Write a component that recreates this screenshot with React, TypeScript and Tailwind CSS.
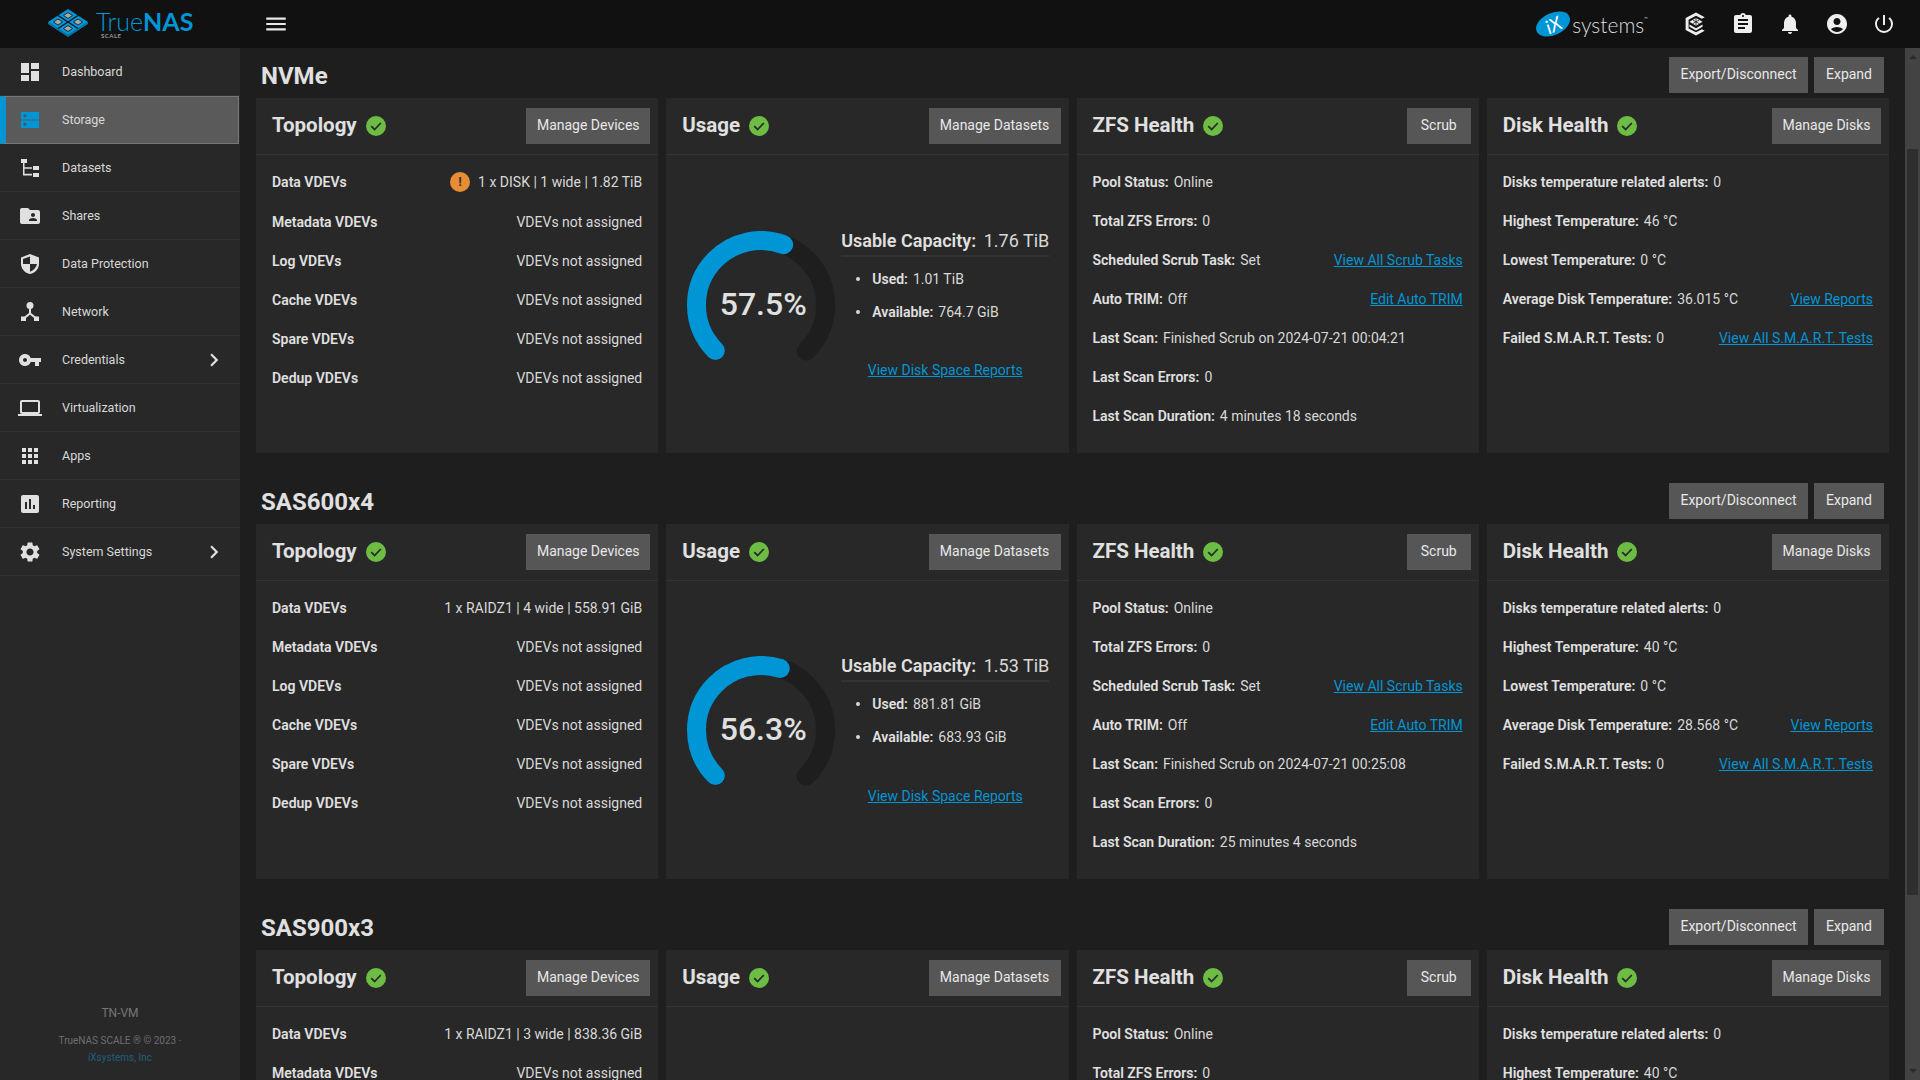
import type { ReactNode } from "react";
import {
  MdAccountCircle,
  MdApps,
  MdAssessment,
  MdAssignment,
  MdChevronRight,
  MdDashboard,
  MdFolderShared,
  MdLaptop,
  MdMenu,
  MdNotifications,
  MdPowerSettingsNew,
  MdSettings,
  MdVpnKey
} from "react-icons/md";

function StorageIcon() {
  return (
    <svg viewBox="0 0 24 24" className="h-6 w-6">
      <rect x="3" y="4" width="18" height="7.5" fill="#0095d5" />
      <rect x="3" y="12.5" width="18" height="7.5" fill="#0095d5" />
      <circle cx="7" cy="7.8" r="1.6" fill="#3c5a6c" />
      <circle cx="7" cy="16.2" r="1.6" fill="#3c5a6c" />
    </svg>
  );
}

function DatasetsIcon() {
  return (
    <svg viewBox="0 0 24 24" className="h-6 w-6 text-[#e0e0e0]" fill="currentColor">
      <rect x="3" y="3" width="6" height="4" />
      <rect x="15" y="10" width="6" height="4" />
      <rect x="15" y="17" width="6" height="4" />
      <path d="M5 7h1.5v4.2H14v1.6H6.5v5H14v1.6H5z" />
    </svg>
  );
}

function ShieldIcon() {
  return (
    <svg viewBox="0 0 24 24" className="h-6 w-6 text-[#e0e0e0]" fill="none">
      <path d="M12 2 3 5.5v6.2c0 5 3.8 9.2 9 10.3 5.2-1.100 9-5.300 9-10.300V5.500z" fill="currentColor" />
      <path d="M12 4.400 5 7v5h7zM12 12v7.700c3.500-1 6.200-4 7-7.700z" fill="#282828" />
    </svg>
  );
}

function NetworkIcon() {
  return (
    <svg viewBox="0 0 24 24" className="h-6 w-6 text-[#e0e0e0]" fill="currentColor">
      <circle cx="12" cy="5.500" r="3.500" />
      <path d="M11 8h2v5l5 4-1.300 1.500L12 14.700l-4.700 3.800L6 17l5-4z" />
      <rect x="3" y="16.500" width="5" height="4.500" />
      <rect x="16" y="16.500" width="5" height="4.500" />
    </svg>
  );
}

function TrueCommandIcon() {
  return (
    <svg viewBox="1.500 1 21 22" className="h-6 w-6 text-[#eeeeee]" fill="none">
      <path d="M12 1.500 2.500 6.500v11l9.500 5 8-4.200-2.600-1.500-5.400 2.800-6.800-3.500V8l6.800-3.500L17.400 7.300 20 5.800z" fill="currentColor" />
      <path d="M12 6.500 18 10l-6 3.500L6 10z" fill="currentColor" />
      <path d="M6 12.500l6 3.500 6-3.500v2l-6 3.500-6-3.500z" fill="currentColor" />
      <path d="M12 6.500v7M9 8.300l6 3.400M15 8.300l-6 3.400" stroke="#111111" strokeWidth="0.700" />
    </svg>
  );
}

function TrueNasMark() {
  const tiles = [
    [20, 6.500],
    [10, 13],
    [30, 13],
    [20, 19.500]
  ];
  return (
    <svg viewBox="0 0 40 28" className="mb-[3px] h-7 w-10 shrink-0">
      <path d="M0 13 20 26 40 13v2L20 28 0 15z" fill="#0078ab" />
      <path d="M20 0 40 13 20 26 0 13z" fill="#0095d5" />
      <path d="M10 6.500 30 19.500M30 6.500 10 19.500" stroke="#111111" strokeWidth="1.200" />
      {tiles.map(([x, y]) => (
        <path
          key={`${x}-${y}`}
          d={`M${x} ${y - 3} ${x + 4.500} ${y} ${x} ${y + 3} ${x - 4.500} ${y}z`}
          fill="#a8a8a8"
          stroke="#111111"
          strokeWidth="0.800"
        />
      ))}
    </svg>
  );
}

function CheckBadge() {
  return (
    <svg viewBox="0 0 20 20" className="h-5 w-5 shrink-0">
      <circle cx="10" cy="10" r="10" fill="#6dbd45" />
      <path d="M5.200 10.200 8.600 13.500 14.800 7" fill="none" stroke="#2a2a2a" strokeWidth="1.800" />
    </svg>
  );
}

function WarnBadge() {
  return (
    <span className="mr-[8px] flex h-5 w-5 shrink-0 items-center justify-center rounded-full bg-[#e68d36] text-[13px] font-bold leading-none text-[#333333]">
      !
    </span>
  );
}

function Gauge({ percent, offset }: { percent: string; offset: string }) {
  const r = 64.5;
  const c = 2 * Math.PI * r;
  const track = c * 0.75;
  const used = track * (parseFloat(percent) / 100);
  return (
    <div className={`relative h-[148px] w-[148px] shrink-0 ${offset}`}>
      <svg viewBox="0 0 148 148" className="h-[148px] w-[148px]">
        <g transform="rotate(135 74 74)" fill="none" strokeWidth="19" strokeLinecap="round">
          <circle cx="74" cy="74" r={r} stroke="#1e1e1e" strokeDasharray={`${track} ${c}`} />
          <circle cx="74" cy="74" r={r} stroke="#0095d5" strokeDasharray={`${used} ${c}`} />
        </g>
      </svg>
      <div className="absolute inset-0 flex items-center justify-center pl-[4px] text-[32px] font-medium text-[#e0e0e0]">
        {percent}
      </div>
    </div>
  );
}

function Btn({ children, width }: { children: ReactNode; width: string }) {
  return (
    <button className={`flex h-9 items-center justify-center bg-[#565656] pb-[2px] text-sm text-[#e8e8e8] ${width}`}>
      {children}
    </button>
  );
}

function Card({
  title,
  action,
  actionWidth,
  children
}: {
  title: string;
  action: string;
  actionWidth: string;
  children: ReactNode;
}) {
  return (
    <section className="h-[355px] min-w-0 overflow-hidden bg-[#282828]">
      <div className="flex h-[57px] items-start justify-between border-b border-[#333333] pl-4 pr-2 pt-[10px]">
        <div className="flex h-9 items-center gap-[9px]">
          <h3 className="pb-[1px] text-[20.5px] font-bold text-[#e0e0e0]">{title}</h3>
          <CheckBadge />
        </div>
        <Btn width={actionWidth}>{action}</Btn>
      </div>
      {children}
    </section>
  );
}

type Row = { label: string; value: string; link?: string; warn?: boolean };

function InfoRows({ rows }: { rows: Row[] }) {
  return (
    <div className="px-4 pt-[7px] text-sm">
      {rows.map((row) => (
        <div key={row.label} className="flex h-[39px] items-center gap-[5px]">
          <span className="font-semibold text-[#e0e0e0]">{row.label}</span>
          <span className="text-[#d8d8d8]">{row.value}</span>
          {row.link && <a className="ml-auto text-[#0095d5] underline">{row.link}</a>}
        </div>
      ))}
    </div>
  );
}

function TopologyRows({ rows }: { rows: Row[] }) {
  return (
    <div className="px-4 pt-[7px] text-sm">
      {rows.map((row) => (
        <div key={row.label} className={`flex items-center justify-between ${row.warn ? "-mt-px h-[41px]" : "h-[39px]"}`}>
          <span className="font-semibold text-[#e0e0e0]">{row.label}</span>
          <span className="flex items-center text-[#d8d8d8]">
            {row.warn && <WarnBadge />}
            {row.value}
          </span>
        </div>
      ))}
    </div>
  );
}

type Usage = {
  percent: string;
  capacity: string;
  used: string;
  available: string;
  top: string;
  linkGap: string;
};

function UsageBody({ usage }: { usage: Usage }) {
  return (
    <div className={`flex items-start gap-[6px] pl-[21px] text-sm ${usage.top}`}>
      <Gauge percent={usage.percent} offset="mt-[4px]" />
      <div className="w-[208px]">
        <p className="flex h-[30px] items-center justify-between border-b-2 border-[#333333] text-lg text-[#d8d8d8]">
          <span className="font-semibold text-[#e0e0e0]">Usable Capacity:</span>
          <span>{usage.capacity}</span>
        </p>
        <ul className="mt-[5px] pl-[15px] text-[#d8d8d8]">
          <li className="flex h-[33px] items-center gap-[5px]">
            <span className="mr-[7px] h-[4px] w-[4px] rounded-full bg-[#d8d8d8]" />
            <b className="font-semibold text-[#e0e0e0]">Used:</b>
            {usage.used}
          </li>
          <li className="flex h-[33px] items-center gap-[5px]">
            <span className="mr-[7px] h-[4px] w-[4px] rounded-full bg-[#d8d8d8]" />
            <b className="font-semibold text-[#e0e0e0]">Available:</b>
            {usage.available}
          </li>
        </ul>
        <a className={`block text-center leading-6 text-[#0095d5] underline ${usage.linkGap}`}>View Disk Space Reports</a>
      </div>
    </div>
  );
}

type Pool = {
  name: string;
  topology: Row[];
  usage?: Usage;
  zfs: Row[];
  disk: Row[];
};

const notAssigned = "VDEVs not assigned";

const pools: Pool[] = [
  {
    name: "NVMe",
    topology: [
      { label: "Data VDEVs", value: "1 x DISK | 1 wide | 1.82 TiB", warn: true },
      { label: "Metadata VDEVs", value: notAssigned },
      { label: "Log VDEVs", value: notAssigned },
      { label: "Cache VDEVs", value: notAssigned },
      { label: "Spare VDEVs", value: notAssigned },
      { label: "Dedup VDEVs", value: notAssigned }
    ],
    usage: {
      percent: "57.5%",
      capacity: "1.76 TiB",
      used: "1.01 TiB",
      available: "764.7 GiB",
      top: "pt-[72px]",
      linkGap: "mt-[30px]"
    },
    zfs: [
      { label: "Pool Status:", value: "Online" },
      { label: "Total ZFS Errors:", value: "0" },
      { label: "Scheduled Scrub Task:", value: "Set", link: "View All Scrub Tasks" },
      { label: "Auto TRIM:", value: "Off", link: "Edit Auto TRIM" },
      { label: "Last Scan:", value: "Finished Scrub on 2024-07-21 00:04:21" },
      { label: "Last Scan Errors:", value: "0" },
      { label: "Last Scan Duration:", value: "4 minutes 18 seconds" }
    ],
    disk: [
      { label: "Disks temperature related alerts:", value: "0" },
      { label: "Highest Temperature:", value: "46 °C" },
      { label: "Lowest Temperature:", value: "0 °C" },
      { label: "Average Disk Temperature:", value: "36.015 °C", link: "View Reports" },
      { label: "Failed S.M.A.R.T. Tests:", value: "0", link: "View All S.M.A.R.T. Tests" }
    ]
  },
  {
    name: "SAS600x4",
    topology: [
      { label: "Data VDEVs", value: "1 x RAIDZ1 | 4 wide | 558.91 GiB" },
      { label: "Metadata VDEVs", value: notAssigned },
      { label: "Log VDEVs", value: notAssigned },
      { label: "Cache VDEVs", value: notAssigned },
      { label: "Spare VDEVs", value: notAssigned },
      { label: "Dedup VDEVs", value: notAssigned }
    ],
    usage: {
      percent: "56.3%",
      capacity: "1.53 TiB",
      used: "881.81 GiB",
      available: "683.93 GiB",
      top: "pt-[71px]",
      linkGap: "mt-[31px]"
    },
    zfs: [
      { label: "Pool Status:", value: "Online" },
      { label: "Total ZFS Errors:", value: "0" },
      { label: "Scheduled Scrub Task:", value: "Set", link: "View All Scrub Tasks" },
      { label: "Auto TRIM:", value: "Off", link: "Edit Auto TRIM" },
      { label: "Last Scan:", value: "Finished Scrub on 2024-07-21 00:25:08" },
      { label: "Last Scan Errors:", value: "0" },
      { label: "Last Scan Duration:", value: "25 minutes 4 seconds" }
    ],
    disk: [
      { label: "Disks temperature related alerts:", value: "0" },
      { label: "Highest Temperature:", value: "40 °C" },
      { label: "Lowest Temperature:", value: "0 °C" },
      { label: "Average Disk Temperature:", value: "28.568 °C", link: "View Reports" },
      { label: "Failed S.M.A.R.T. Tests:", value: "0", link: "View All S.M.A.R.T. Tests" }
    ]
  },
  {
    name: "SAS900x3",
    topology: [
      { label: "Data VDEVs", value: "1 x RAIDZ1 | 3 wide | 838.36 GiB" },
      { label: "Metadata VDEVs", value: notAssigned }
    ],
    zfs: [
      { label: "Pool Status:", value: "Online" },
      { label: "Total ZFS Errors:", value: "0" }
    ],
    disk: [
      { label: "Disks temperature related alerts:", value: "0" },
      { label: "Highest Temperature:", value: "40 °C" }
    ]
  }
];

function PoolSection({ pool }: { pool: Pool }) {
  return (
    <div className="pb-[21px] pt-[9px]">
      <div className="mb-[5px] flex h-9 items-center justify-between pl-[5px] pr-[5px]">
        <h2 className="pt-[1px] text-2xl font-bold text-[#e0e0e0]">{pool.name}</h2>
        <div className="flex gap-[6px]">
          <Btn width="w-[139px]">Export/Disconnect</Btn>
          <Btn width="w-[70px]">Expand</Btn>
        </div>
      </div>
      <div className="grid grid-cols-4 gap-2">
        <Card title="Topology" action="Manage Devices" actionWidth="w-[124px]">
          <TopologyRows rows={pool.topology} />
        </Card>
        <Card title="Usage" action="Manage Datasets" actionWidth="w-[132px]">
          {pool.usage && <UsageBody usage={pool.usage} />}
        </Card>
        <Card title="ZFS Health" action="Scrub" actionWidth="w-[64px]">
          <InfoRows rows={pool.zfs} />
        </Card>
        <Card title="Disk Health" action="Manage Disks" actionWidth="w-[109px]">
          <InfoRows rows={pool.disk} />
        </Card>
      </div>
    </div>
  );
}

const navItems: { label: string; icon: ReactNode; more?: boolean; active?: boolean }[] = [
  { label: "Dashboard", icon: <MdDashboard size={24} /> },
  { label: "Storage", icon: <StorageIcon />, active: true },
  { label: "Datasets", icon: <DatasetsIcon /> },
  { label: "Shares", icon: <MdFolderShared size={24} /> },
  { label: "Data Protection", icon: <ShieldIcon /> },
  { label: "Network", icon: <NetworkIcon /> },
  { label: "Credentials", icon: <MdVpnKey size={24} />, more: true },
  { label: "Virtualization", icon: <MdLaptop size={24} /> },
  { label: "Apps", icon: <MdApps size={24} /> },
  { label: "Reporting", icon: <MdAssessment size={24} /> },
  { label: "System Settings", icon: <MdSettings size={24} />, more: true }
];

function Sidebar() {
  return (
    <aside className="flex w-[240px] shrink-0 flex-col bg-[#282828]">
      <nav>
        {navItems.map((item) => (
          <div
            key={item.label}
            className={
              item.active
                ? "mr-px flex h-12 items-center border border-l-[6px] border-[#777777] border-l-[#0095d5] bg-[#5a5a5a] pl-3 pr-4"
                : "flex h-12 items-center border-b border-[#333333] pl-[18px] pr-4"
            }
          >
            <span className="flex w-6 justify-center text-[#e0e0e0]">{item.icon}</span>
            <span className={`ml-5 text-[12.5px] text-[#d8d8d8] ${item.active ? "" : "pt-[2px]"}`}>{item.label}</span>
            {item.more && <MdChevronRight size={26} className="ml-auto mr-[-3px] text-[#e0e0e0]" />}
          </div>
        ))}
      </nav>
      <footer className="mt-auto pb-[14px] text-center text-[10px] text-[#6f6f6f]">
        <p className="text-[12px] leading-5 text-[#777777]">TN-VM</p>
        <p className="mt-[9px] leading-[18px]">TrueNAS SCALE ® © 2023 <span className="text-[#1f5f7e]">-</span></p>
        <p className="leading-[16px] text-[#1f5f7e]">iXsystems, Inc</p>
      </footer>
    </aside>
  );
}

function TopBar() {
  return (
    <header className="flex h-12 shrink-0 items-center bg-[#111111]">
      <div className="flex w-[240px] shrink-0 items-center pl-[48px]">
        <TrueNasMark />
        <div className="ml-[8px] font-['Lato',sans-serif]">
          <div className="text-[25px] leading-[22px] text-[#0095d5]">
            <span className="font-light">True</span>
            <span className="font-bold">NAS</span>
          </div>
          <div className="pl-[5px] text-[6px] font-bold leading-[7px] tracking-[0.5px] text-[#999999]">SCALE</div>
        </div>
      </div>
      <MdMenu size={26} className="ml-[23px] text-[#e8e8e8]" />
      <div className="ml-auto flex items-center pr-[13px] text-[#eeeeee]">
        <div className="mr-[24px] flex items-center">
          <span className="flex h-[22px] w-[36px] -rotate-[25deg] items-center justify-center rounded-[50%] bg-[#0095d5] font-['Lato',sans-serif] text-[19px] italic leading-none text-white">
            iX
          </span>
          <span className="ml-[1px] font-['Lato',sans-serif] text-[21px] font-light leading-none text-[#dddddd]">systems</span>
          <span className="mb-[10px] text-[6px] leading-none text-[#dddddd]">™</span>
        </div>
        <span className="flex w-[47px] justify-center"><TrueCommandIcon /></span>
        <span className="flex w-[47px] justify-center"><MdAssignment size={24} /></span>
        <span className="flex w-[47px] justify-center"><MdNotifications size={24} /></span>
        <span className="flex w-[47px] justify-center"><MdAccountCircle size={24} /></span>
        <span className="flex w-[47px] justify-center"><MdPowerSettingsNew size={24} /></span>
      </div>
    </header>
  );
}

function Scrollbar() {
  return (
    <div className="flex w-[15px] shrink-0 flex-col items-center bg-[#434343] py-[7px]">
      <span className="h-0 w-0 border-x-[4px] border-b-[4px] border-x-transparent border-b-[#2a2a2a]" />
      <span className="mt-[90px] w-[11px] flex-1 bg-[#2e2e2e]" />
      <span className="mt-[174px] h-0 w-0 border-x-[4px] border-t-[4px] border-x-transparent border-t-[#2a2a2a]" />
    </div>
  );
}

export default function App() {
  return (
    <div className="flex h-screen w-full flex-col overflow-hidden bg-[#1e1e1e] font-['Roboto',sans-serif]">
      <TopBar />
      <div className="flex min-h-0 flex-1">
        <Sidebar />
        <main className="min-w-0 flex-1 overflow-hidden pl-4 pr-[16px]">
          {pools.map((pool) => (
            <PoolSection key={pool.name} pool={pool} />
          ))}
        </main>
        <Scrollbar />
      </div>
    </div>
  );
}
